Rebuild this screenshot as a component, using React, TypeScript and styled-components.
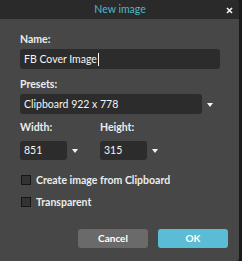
import styled, { createGlobalStyle } from "styled-components";

const GlobalStyle = createGlobalStyle`
  html, body {
    margin: 0;
    padding: 0;
    background: #1b1b1b;
  }
  * {
    box-sizing: border-box;
  }
`;

const App = () => {
  return (
    <>
      <GlobalStyle />
      <Dialog>
        <TitleBar>
          <Title>New image</Title>
          <CloseButton>
            <svg width="7" height="7" viewBox="0 0 7 7">
              <path d="M1 1L6 6M6 1L1 6" stroke="#f0f0f0" strokeWidth="1.7" />
            </svg>
          </CloseButton>
        </TitleBar>

        <Body>
          <Label $gap={3}>Name:</Label>
          <TextField>
            FB Cover Image
            <Caret />
          </TextField>

          <Label $top={9} $gap={3}>Presets:</Label>
          <SelectRow>
            <Field $width={182} $height={20}>Clipboard 922 x 778</Field>
            <Arrow />
          </SelectRow>

          <SizeRow>
            <SizeColumn>
              <Label $gap={7}>Width:</Label>
              <SelectRow>
                <Field $width={47} $height={19}>851</Field>
                <Arrow />
              </SelectRow>
            </SizeColumn>
            <SizeColumn>
              <Label $gap={7}>Height:</Label>
              <SelectRow>
                <Field $width={47} $height={19}>315</Field>
                <Arrow />
              </SelectRow>
            </SizeColumn>
          </SizeRow>

          <CheckRow $top={15}>
            <CheckBox />
            <CheckLabel>Create image from Clipboard</CheckLabel>
          </CheckRow>
          <CheckRow $top={12}>
            <CheckBox />
            <CheckLabel>Transparent</CheckLabel>
          </CheckRow>

          <Buttons>
            <Button>Cancel</Button>
            <Button $primary>OK</Button>
          </Buttons>
        </Body>
      </Dialog>
    </>
  );
};

export default App;

const Dialog = styled.div`
  width: 239px;
  height: 261px;
  background: #474747;
  border-radius: 0 4px 3px 0;
  overflow: hidden;
  font-family: "Lato", "Open Sans", sans-serif;
  color: #ececec;
`;

const TitleBar = styled.div`
  height: 19px;
  background: #2a2a2a;
  display: flex;
  align-items: center;
  justify-content: center;
  position: relative;
`;

const Title = styled.div`
  font-size: 10.5px;
  color: #4fb8cb;
  line-height: 19px;
  padding-left: 1px;
`;

const CloseButton = styled.div`
  position: absolute;
  left: 226px;
  top: 7px;
  width: 7px;
  height: 7px;
  display: flex;

  svg {
    display: block;
  }
`;

const Body = styled.div`
  padding: 14px 0 0 20px;
  display: flex;
  flex-direction: column;
`;

const Label = styled.div<{ $top?: number; $gap: number }>`
  font-size: 10.5px;
  font-weight: 700;
  line-height: 13px;
  height: 13px;
  margin-top: ${({ $top }) => $top ?? 0}px;
  margin-bottom: ${({ $gap }) => $gap}px;
`;

const TextField = styled.div`
  width: 200px;
  height: 20px;
  background: #2c2c2c;
  border-radius: 3px;
  font-size: 10.5px;
  line-height: 20px;
  padding-left: 4px;
  display: flex;
  align-items: center;
  color: #f4f4f4;
`;

const Caret = styled.span`
  display: inline-block;
  width: 1px;
  height: 13px;
  background: #ffffff;
  margin-left: 1px;
`;

const SelectRow = styled.div`
  display: flex;
  align-items: center;
  gap: 5px;
`;

const Field = styled.div<{ $width: number; $height: number }>`
  width: ${({ $width }) => $width}px;
  height: ${({ $height }) => $height}px;
  background: #2c2c2c;
  border-radius: 3px;
  font-size: 10.5px;
  line-height: ${({ $height }) => $height}px;
  padding-left: 4px;
  color: #f4f4f4;
`;

const Arrow = styled.div`
  width: 0;
  height: 0;
  border-left: 3.5px solid transparent;
  border-right: 3.5px solid transparent;
  border-top: 4px solid #f5f5f5;
  margin-top: 1px;
`;

const SizeRow = styled.div`
  display: flex;
  margin-top: 7px;
`;

const SizeColumn = styled.div`
  width: 80px;
  display: flex;
  flex-direction: column;
`;

const CheckRow = styled.div<{ $top: number }>`
  display: flex;
  align-items: center;
  gap: 5px;
  height: 10px;
  margin-top: ${({ $top }) => $top}px;
  padding-left: 1px;
`;

const CheckBox = styled.div`
  width: 10px;
  height: 10px;
  background: #333333;
  border: 1px solid #161616;
`;

const CheckLabel = styled.div`
  font-size: 10.5px;
  font-weight: 700;
  line-height: 10px;
`;

const Buttons = styled.div`
  display: flex;
  justify-content: flex-end;
  gap: 10px;
  margin-top: 22px;
  padding-right: 11px;
`;

const Button = styled.div<{ $primary?: boolean }>`
  width: 70px;
  height: 19px;
  border-radius: 3px;
  background: ${({ $primary }) => ($primary ? "#5bbdd5" : "#6a6a6a")};
  font-size: 10px;
  font-weight: 700;
  line-height: 19px;
  text-align: center;
  color: #ffffff;
`;
